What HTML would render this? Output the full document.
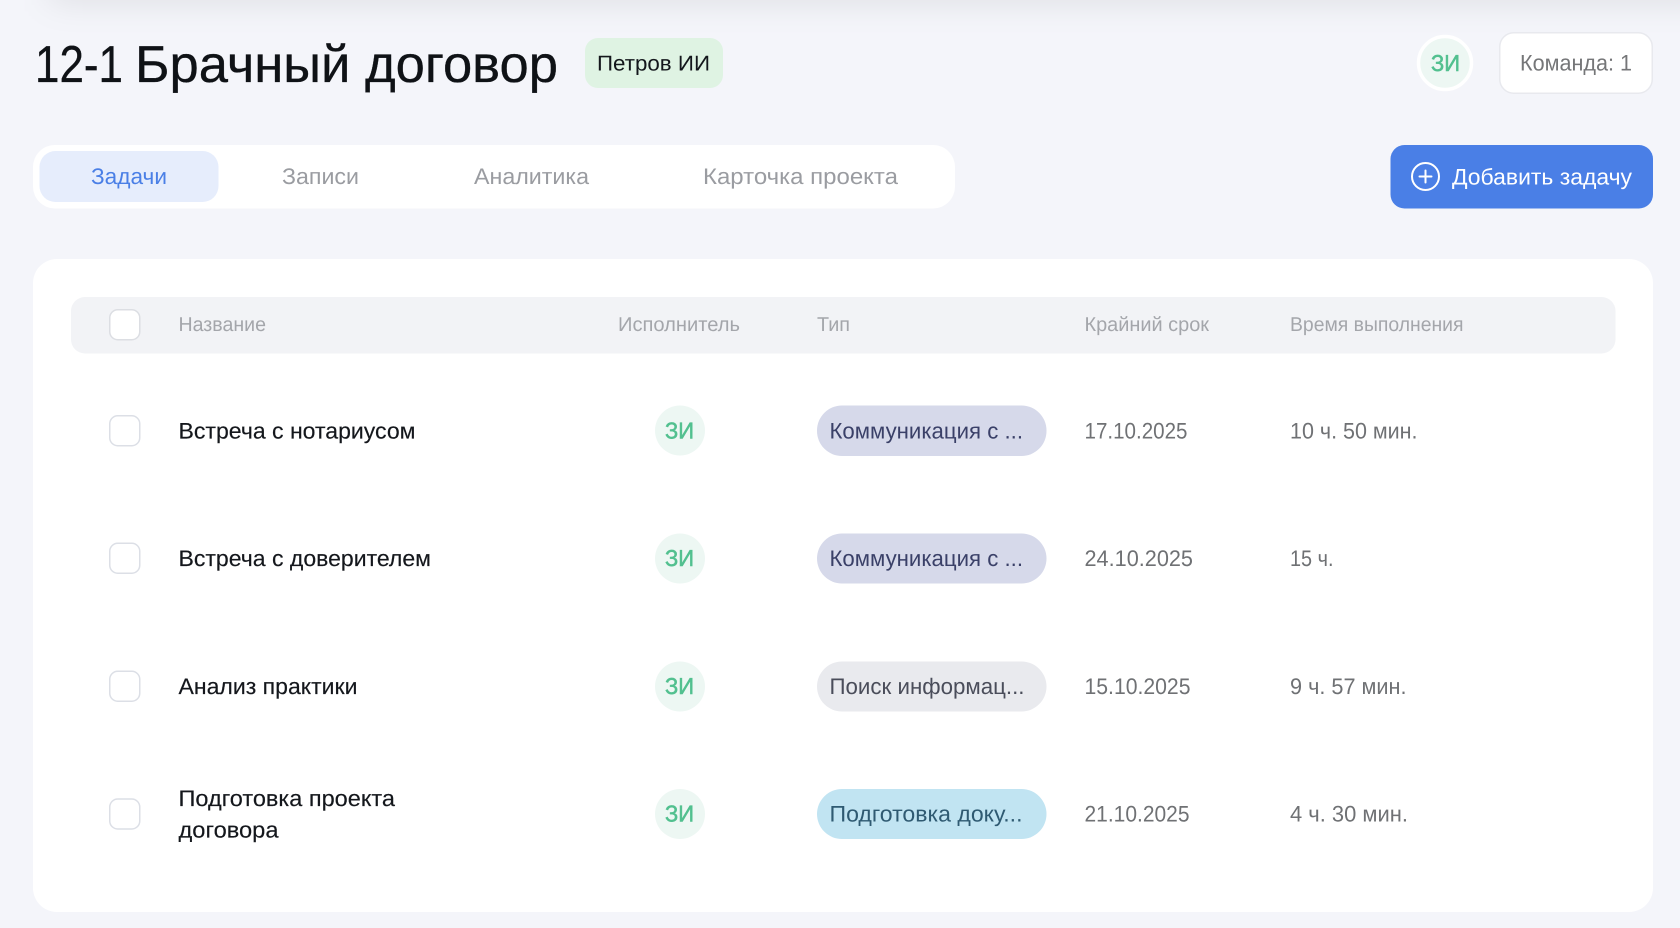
<!DOCTYPE html>
<html lang="ru">
<head>
<meta charset="utf-8">
<title>12-1 Брачный договор</title>
<style>
html,body{margin:0;padding:0;width:1680px;height:928px;overflow:hidden;background:#f4f5fa}
svg{position:absolute;left:0;top:0;display:block;filter:blur(.3px)}
text{font-family:"Liberation Sans","DejaVu Sans",sans-serif;text-rendering:geometricPrecision}
.hd{font-size:20px;fill:#a4a6ab}
.nm{font-size:22.5px;fill:#14171c;stroke:#14171c;stroke-width:.15px}
.dt{font-size:22.5px;fill:#6f7174}
.zi{font-size:23px;fill:#52c08f;stroke:#52c08f;stroke-width:.55px}
.tb{font-size:22.5px;fill:#9a9ca1}
.pl{font-size:22.5px}
</style>
</head>
<body>
<svg width="1680" height="928" viewBox="0 0 1680 928" xmlns="http://www.w3.org/2000/svg">
<defs>
<filter id="b" x="-10%" y="-400%" width="120%" height="900%"><feGaussianBlur stdDeviation="17"/></filter>
</defs>
<rect width="1680" height="928" fill="#f4f5fa"/>
<rect x="50" y="-30" width="1700" height="30" fill="#000" fill-opacity=".1" filter="url(#b)"/>

<text x="35" y="82" font-size="52" fill="#0f1216" stroke="#0f1216" stroke-width=".3" textLength="88" lengthAdjust="spacingAndGlyphs">12-1</text>
<text x="135" y="82" font-size="52" fill="#0f1216" stroke="#0f1216" stroke-width=".3" textLength="423" lengthAdjust="spacingAndGlyphs">Брачный договор</text>
<rect x="585" y="38" width="138" height="50" rx="13" fill="#dff3e3"/>
<text x="597" y="70.500" font-size="21.500" fill="#14171c" textLength="113" lengthAdjust="spacingAndGlyphs">Петров ИИ</text>

<circle cx="1445" cy="63" r="26.500" fill="#edf7f3" stroke="#fff" stroke-width="3.500"/>
<text class="zi" x="1431" y="71" textLength="29" lengthAdjust="spacingAndGlyphs">ЗИ</text>
<rect x="1499.750" y="32.750" width="152.500" height="60.500" rx="14" fill="#fff" stroke="#e8e9ee" stroke-width="1.500"/>
<text x="1520" y="70.500" font-size="22.500" fill="#757678" textLength="112" lengthAdjust="spacingAndGlyphs">Команда: 1</text>

<rect x="33" y="145" width="922" height="63.500" rx="22" fill="#fff"/>
<rect x="39.500" y="151" width="179" height="51" rx="16" fill="#e6edfc"/>
<text class="tb" x="91" y="184" style="fill:#4a7fe6" textLength="76" lengthAdjust="spacingAndGlyphs">Задачи</text>
<text class="tb" x="282" y="184" textLength="77" lengthAdjust="spacingAndGlyphs">Записи</text>
<text class="tb" x="474" y="184" textLength="115" lengthAdjust="spacingAndGlyphs">Аналитика</text>
<text class="tb" x="703" y="184" textLength="195" lengthAdjust="spacingAndGlyphs">Карточка проекта</text>

<rect x="1390.500" y="145" width="262.500" height="63.500" rx="14" fill="#4a7fe6"/>
<circle cx="1425.500" cy="176.500" r="13.500" fill="none" stroke="#fff" stroke-width="2"/>
<path d="M1425.500 170.500v12M1419.500 176.500h12" stroke="#fff" stroke-width="2" stroke-linecap="round" fill="none"/>
<text x="1452" y="184.500" font-size="22.500" fill="#fff" textLength="180" lengthAdjust="spacingAndGlyphs">Добавить задачу</text>

<rect x="33" y="259" width="1620" height="653" rx="24" fill="#fff"/>
<rect x="71" y="297" width="1544.500" height="56.500" rx="14" fill="#f2f3f6"/>
<rect x="109.750" y="309.750" width="30" height="30" rx="8" fill="#fff" stroke="#dcdee3" stroke-width="1.500"/>
<text class="hd" x="178.500" y="331" textLength="87.500" lengthAdjust="spacingAndGlyphs">Название</text>
<text class="hd" x="618" y="331" textLength="122" lengthAdjust="spacingAndGlyphs">Исполнитель</text>
<text class="hd" x="817" y="331" textLength="33" lengthAdjust="spacingAndGlyphs">Тип</text>
<text class="hd" x="1084.500" y="331" textLength="124.500" lengthAdjust="spacingAndGlyphs">Крайний срок</text>
<text class="hd" x="1290" y="331" textLength="173.500" lengthAdjust="spacingAndGlyphs">Время выполнения</text>

<!-- row 1 -->
<rect x="109.750" y="415.750" width="30" height="30" rx="8" fill="#fff" stroke="#dcdfe6" stroke-width="1.500"/>
<text class="nm" x="178.500" y="438.500" textLength="237" lengthAdjust="spacingAndGlyphs">Встреча с нотариусом</text>
<circle cx="680" cy="430.500" r="25" fill="#edf7f3"/>
<text class="zi" x="665" y="438.500" textLength="29" lengthAdjust="spacingAndGlyphs">ЗИ</text>
<rect x="817" y="405.500" width="229.500" height="50.500" rx="25" fill="#d6d9ea"/>
<text class="pl" x="829.500" y="438.500" fill="#3a4068" textLength="193.500" lengthAdjust="spacingAndGlyphs">Коммуникация с ...</text>
<text class="dt" x="1084.500" y="438.500" textLength="103" lengthAdjust="spacingAndGlyphs">17.10.2025</text>
<text class="dt" x="1290" y="438.500" textLength="127.500" lengthAdjust="spacingAndGlyphs">10 ч. 50 мин.</text>

<!-- row 2 -->
<rect x="109.750" y="543.250" width="30" height="30" rx="8" fill="#fff" stroke="#dcdfe6" stroke-width="1.500"/>
<text class="nm" x="178.500" y="566" textLength="252.500" lengthAdjust="spacingAndGlyphs">Встреча с доверителем</text>
<circle cx="680" cy="558.500" r="25" fill="#edf7f3"/>
<text class="zi" x="665" y="566" textLength="29" lengthAdjust="spacingAndGlyphs">ЗИ</text>
<rect x="817" y="533.500" width="229.500" height="50" rx="25" fill="#d6d9ea"/>
<text class="pl" x="829.500" y="566" fill="#3a4068" textLength="193.500" lengthAdjust="spacingAndGlyphs">Коммуникация с ...</text>
<text class="dt" x="1084.500" y="566" textLength="108.500" lengthAdjust="spacingAndGlyphs">24.10.2025</text>
<text class="dt" x="1290" y="566" textLength="43.500" lengthAdjust="spacingAndGlyphs">15 ч.</text>

<!-- row 3 -->
<rect x="109.750" y="671.250" width="30" height="30" rx="8" fill="#fff" stroke="#dcdfe6" stroke-width="1.500"/>
<text class="nm" x="178.500" y="694" textLength="179" lengthAdjust="spacingAndGlyphs">Анализ практики</text>
<circle cx="680" cy="686.500" r="25" fill="#edf7f3"/>
<text class="zi" x="665" y="694" textLength="29" lengthAdjust="spacingAndGlyphs">ЗИ</text>
<rect x="817" y="661.500" width="229.500" height="50" rx="25" fill="#e9eaee"/>
<text class="pl" x="829.500" y="694" fill="#4a4d5a" textLength="195" lengthAdjust="spacingAndGlyphs">Поиск информац...</text>
<text class="dt" x="1084.500" y="694" textLength="106" lengthAdjust="spacingAndGlyphs">15.10.2025</text>
<text class="dt" x="1290" y="694" textLength="116.500" lengthAdjust="spacingAndGlyphs">9 ч. 57 мин.</text>

<!-- row 4 -->
<rect x="109.750" y="799" width="30" height="30" rx="8" fill="#fff" stroke="#dcdfe6" stroke-width="1.500"/>
<text class="nm" x="178.500" y="806" textLength="216.500" lengthAdjust="spacingAndGlyphs">Подготовка проекта</text>
<text class="nm" x="178.500" y="837.500" textLength="100" lengthAdjust="spacingAndGlyphs">договора</text>
<circle cx="680" cy="814" r="25" fill="#edf7f3"/>
<text class="zi" x="665" y="821.500" textLength="29" lengthAdjust="spacingAndGlyphs">ЗИ</text>
<rect x="817" y="789" width="229.500" height="50" rx="25" fill="#c1e4f2"/>
<text class="pl" x="829.500" y="821.500" fill="#2f5a72" textLength="193" lengthAdjust="spacingAndGlyphs">Подготовка доку...</text>
<text class="dt" x="1084.500" y="821.500" textLength="105" lengthAdjust="spacingAndGlyphs">21.10.2025</text>
<text class="dt" x="1290" y="821.500" textLength="118" lengthAdjust="spacingAndGlyphs">4 ч. 30 мин.</text>
</svg>
</body>
</html>
